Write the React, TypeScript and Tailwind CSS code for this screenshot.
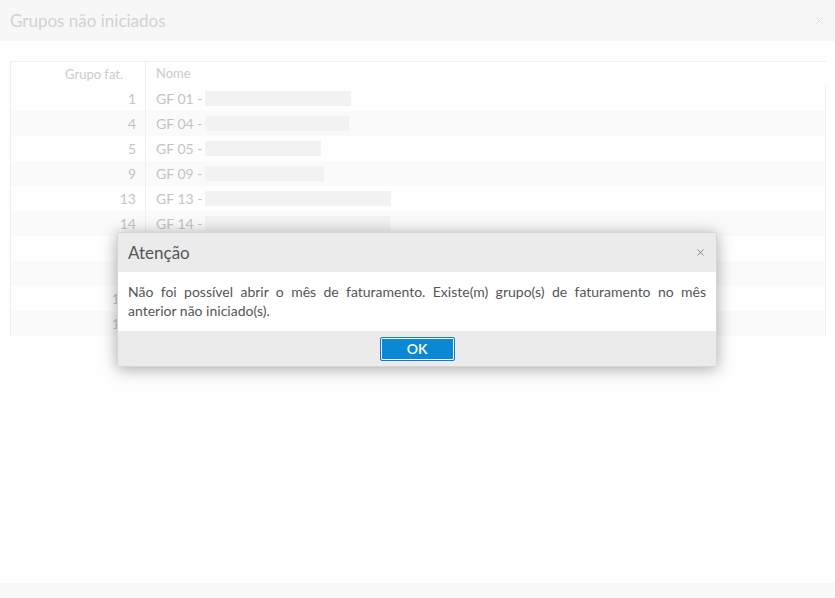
import { X } from "lucide-react";

type Row = { id: number; code: string; blur: number };

const ROWS: Row[] = [
  { id: 1, code: "GF 01 -", blur: 146 },
  { id: 4, code: "GF 04 -", blur: 144 },
  { id: 5, code: "GF 05 -", blur: 116 },
  { id: 9, code: "GF 09 -", blur: 119 },
  { id: 13, code: "GF 13 -", blur: 186 },
  { id: 14, code: "GF 14 -", blur: 185 },
  { id: 15, code: "GF 15 -", blur: 150 },
  { id: 16, code: "GF 16 -", blur: 130 },
  { id: 101, code: "GF 101 -", blur: 160 },
  { id: 102, code: "GF 102 -", blur: 140 },
];

const font = { fontFamily: '"Segoe UI", Lato, "Noto Sans", sans-serif' };

export default function App() {
  return (
    <div className="relative h-[598px] w-[835px] overflow-hidden bg-[#fefefe]" style={font}>
      <div className="flex h-[598px] flex-col">
        <div className="flex h-[41px] items-center justify-between bg-[#f7f7f7] pl-[10px] pr-[10px]">
          <span className="text-[17px] text-[#d2d2d2]">Grupos não iniciados</span>
          <X size={11} strokeWidth={1.5} className="text-[#d4d4d4]" />
        </div>

        <div className="flex-1 px-[10px] pt-[20px]">
          <div className="w-[816px] border-t border-l border-[#efefef]">
            <div className="flex h-[24px] items-center text-[13px] text-[#cbcbcb]">
              <div className="w-[135px] border-r border-[#efefef] pr-[22px] text-right leading-[24px]">Grupo fat.</div>
              <div className="pl-[10px]">Nome</div>
            </div>
            {ROWS.map((r, i) => (
              <div
                key={r.id}
                className={
                  "flex h-[25px] items-center text-[14px] text-[#c4c4c4] " +
                  (i % 2 === 1 ? "bg-[#fafafa]" : "")
                }
              >
                <div className="h-[25px] w-[135px] border-r border-[#efefef] pr-[9px] text-right leading-[25px]">{r.id}</div>
                <div className="flex flex-1 items-center border-r border-[#efefef] pl-[10px] leading-[25px]">
                  <span>{r.code}</span>
                  <span className="ml-[3px] h-[15px] bg-[#f2f2f2]" style={{ width: r.blur }} />
                </div>
              </div>
            ))}
          </div>
        </div>

        <div className="h-[15px] bg-[#f8f8f8]" />
      </div>

      <div className="absolute left-[117px] top-[232px] w-[600px] overflow-hidden rounded-[3px] border border-[#d6d6d6] bg-white shadow-[0_2px_16px_rgba(0,0,0,0.35)]">
        <div className="flex h-[39px] items-center justify-between bg-[#ebebeb] pl-[10px] pr-[10px]">
          <span className="text-[17px] text-[#555555]">Atenção</span>
          <X size={11} strokeWidth={1.6} className="text-[#666666]" />
        </div>
        <div className="px-[10px] pt-[10px] pb-[11px] text-justify text-[14px] leading-[19px] text-[#555555]">
          Não foi possível abrir o mês de faturamento. Existe(m) grupo(s) de faturamento no mês anterior não iniciado(s).
        </div>
        <div className="flex h-[35px] items-center justify-center bg-[#ebebeb]">
          <button
            type="button"
            className="h-[24px] w-[75px] rounded-[2px] border border-[#0a7ecb] bg-[#0a88d4] text-[14px] font-semibold text-white shadow-[inset_0_0_0_1px_#ffffff]"
          >
            OK
          </button>
        </div>
      </div>
    </div>
  );
}
